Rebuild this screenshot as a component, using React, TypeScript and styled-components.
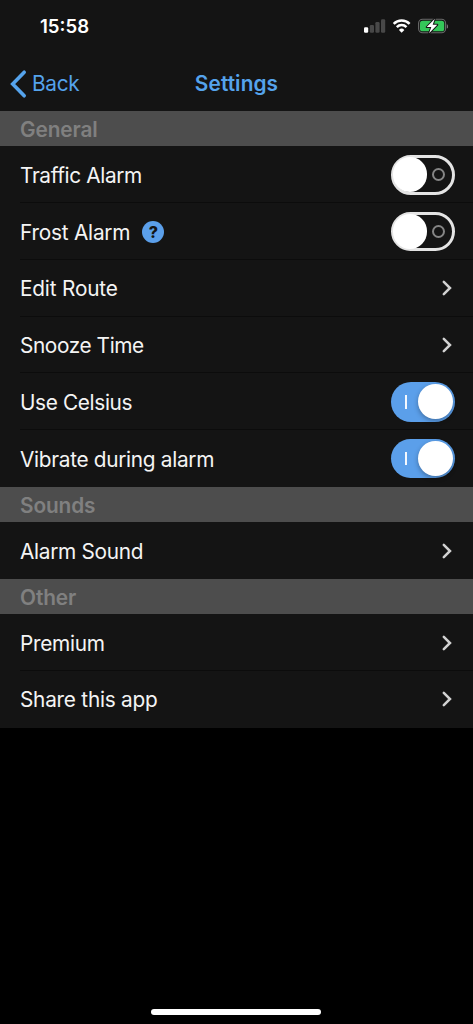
import React from "react";
import styled, { createGlobalStyle } from "styled-components";

const GlobalStyle = createGlobalStyle`
  * { box-sizing: border-box; }
  html, body { margin: 0; background: #000; }
  body { font-family: Inter, "Liberation Sans", sans-serif; overflow: hidden; }
`;

const Screen = styled.div`
  display: flex;
  flex-direction: column;
  width: 473px;
  height: 1024px;
  background: #000;
`;

const StatusBar = styled.header`
  display: flex;
  justify-content: space-between;
  height: 56px;
  padding: 0 25px 0 40px;
  background: #141414;
`;

const Clock = styled.time`
  padding-top: 14px;
  font-size: 18.6px;
  line-height: 24px;
  font-weight: 600;
  letter-spacing: 0;
  color: #fff;
`;

const NavBar = styled.nav`
  display: grid;
  grid-template-columns: 1fr auto 1fr;
  align-items: center;
  height: 55px;
  padding: 0 10px;
  background: #141414;
  color: #55a3ec;
`;

const BackButton = styled.button`
  display: flex;
  align-items: center;
  gap: 5px;
  padding: 0;
  border: 0;
  background: none;
  color: inherit;
  font: 400 20.8px/28px Inter, sans-serif;
  letter-spacing: -0.3px;
`;

const Title = styled.h1`
  margin: 0;
  font-size: 20.8px;
  line-height: 28px;
  font-weight: 600;
  letter-spacing: 0.1px;
`;

const SectionHeader = styled.h2`
  flex: none;
  height: 35.3px;
  margin: 0;
  padding: 1.3px 20px 0;
  background: #4d4d4d;
  color: #808080;
  font-size: 20.8px;
  line-height: 35px;
  font-weight: 600;
  letter-spacing: -0.1px;
`;

const Row = styled.div`
  display: flex;
  flex: none;
  height: 56.75px;
  padding-left: 20px;
  background: #141414;
`;

const RowBody = styled.div<{ $line: boolean }>`
  display: flex;
  flex: 1;
  align-items: center;
  justify-content: space-between;
  padding: 1.4px 18px 0 0;
  border-bottom: 1px solid ${(p) => (p.$line ? "#0c0c0c" : "#141414")};
`;

const Label = styled.span<{ $tracking: number }>`
  display: flex;
  align-items: center;
  gap: 12px;
  padding-top: 1.8px;
  color: #f4f4f4;
  font-size: 20.8px;
  line-height: 28px;
  letter-spacing: ${(p) => p.$tracking}px;
  white-space: nowrap;
`;

const HelpBadge = styled.span`
  display: grid;
  place-items: center;
  width: 22px;
  height: 22px;
  margin-bottom: 2px;
  border-radius: 50%;
  background: #5b9fea;
  color: #141414;
  font-size: 16px;
  line-height: 22px;
  font-weight: 800;
  letter-spacing: 0;
`;

const Track = styled.span<{ $on: boolean }>`
  display: flex;
  flex-direction: ${(p) => (p.$on ? "row-reverse" : "row")};
  align-items: center;
  width: 64.5px;
  height: 39.3px;
  padding: ${(p) => (p.$on ? "0 2.4px" : "0")};
  border: ${(p) => (p.$on ? "0" : "3px solid #e4e4e4")};
  border-radius: 20px;
  background: ${(p) => (p.$on ? "#5b9fea" : "#141414")};
`;

const Knob = styled.span<{ $on: boolean }>`
  flex: none;
  width: 34.8px;
  height: 34.8px;
  margin-left: ${(p) => (p.$on ? "0" : "-1px")};
  border-radius: 50%;
  background: #fff;
  box-shadow: ${(p) => (p.$on ? "0 2px 5px rgba(0,0,0,.3)" : "none")};
`;

const OffMark = styled.span`
  width: 13px;
  height: 13px;
  margin-left: 4.5px;
  border: 2px solid #858585;
  border-radius: 50%;
`;

const OnMark = styled.span`
  width: 2px;
  height: 13.5px;
  margin-right: 10.7px;
  background: #f4f8fe;
`;

const ChevronBox = styled.span`
  display: flex;
  padding-right: 2px;
`;

const Spacer = styled.div`
  flex: 1;
`;

const HomeIndicator = styled.div`
  align-self: center;
  width: 170px;
  height: 6px;
  margin: 0 1px 9px 0;
  border-radius: 3px;
  background: #fff;
`;

function StatusIcons() {
  return (
    <svg width="85" height="56" viewBox="363 0 85 56">
      <rect x="364" y="27.3" width="4.2" height="5.4" rx="1.2" fill="#fff" />
      <rect x="369.8" y="25" width="4.2" height="7.7" rx="1.2" fill="#484848" />
      <rect x="375.4" y="22" width="4.2" height="10.7" rx="1.2" fill="#484848" />
      <rect x="381" y="19.2" width="4.2" height="13.5" rx="1.2" fill="#484848" />
      <g fill="none" stroke="#fff" strokeWidth="2.5">
        <path d="M393.7 23.8a11.2 11.2 0 0 1 15.9 0" />
        <path d="M396.8 27.1a6.9 6.9 0 0 1 9.7 0" />
      </g>
      <path d="M401.65 32.8l-2.7-2.9a3.9 3.9 0 0 1 5.4 0z" fill="#fff" />
      <rect x="418.6" y="19.3" width="27" height="13.4" rx="4" fill="none" stroke="#6a6a6a" strokeWidth="1.1" />
      <rect x="420" y="20.7" width="24.2" height="10.6" rx="2.6" fill="#34c759" />
      <path d="M446.8 24v4.6c1.2-.5 1.6-1.3 1.2-2.3 0-1.1-.4-1.8-1.2-2.3z" fill="#777" />
      <path
        d="M434.8 18.7l-8.1 8.4h4.6l-2.2 6.2 8.2-8.5h-4.6z"
        fill="#fff"
        stroke="#141414"
        strokeWidth="2"
        paintOrder="stroke"
        strokeLinejoin="round"
      />
    </svg>
  );
}

function Switch({ on }: { on: boolean }) {
  return (
    <Track $on={on} role="switch" aria-checked={on}>
      <Knob $on={on} />
      {on ? <OnMark /> : <OffMark />}
    </Track>
  );
}

function Chevron() {
  return (
    <ChevronBox>
      <svg width="11" height="16" viewBox="0 0 11 16">
        <path d="M1.8 1.8L8 8L1.8 14.2" fill="none" stroke="#d2d2d2" strokeWidth="2.5" strokeLinecap="round" />
      </svg>
    </ChevronBox>
  );
}

type Item = { label: string; toggle?: boolean; help?: boolean; tracking?: number };

const sections: { title: string; items: Item[] }[] = [
  {
    title: "General",
    items: [
      { label: "Traffic Alarm", toggle: false, tracking: -0.36 },
      { label: "Frost Alarm", toggle: false, help: true, tracking: -0.22 },
      { label: "Edit Route", tracking: -0.18 },
      { label: "Snooze Time", tracking: -0.4 },
      { label: "Use Celsius", toggle: true, tracking: -0.36 },
      { label: "Vibrate during alarm", toggle: true },
    ],
  },
  { title: "Sounds", items: [{ label: "Alarm Sound" }] },
  { title: "Other", items: [{ label: "Premium" }, { label: "Share this app", tracking: -0.24 }] },
];

export default function App() {
  return (
    <>
      <GlobalStyle />
      <Screen>
        <StatusBar>
          <Clock>15:58</Clock>
          <StatusIcons />
        </StatusBar>
        <NavBar>
          <BackButton>
            <svg width="17" height="30" viewBox="0 0 17 30">
              <path d="M14.2 3.2L2.7 15L14.2 26.8" fill="none" stroke="currentColor" strokeWidth="3.6" strokeLinecap="round" />
            </svg>
            Back
          </BackButton>
          <Title>Settings</Title>
        </NavBar>
        {sections.map((section) => (
          <React.Fragment key={section.title}>
            <SectionHeader>{section.title}</SectionHeader>
            {section.items.map((item, i) => (
              <Row key={item.label}>
                <RowBody $line={i < section.items.length - 1}>
                  <Label $tracking={item.tracking ?? -0.3}>
                    {item.label}
                    {item.help && <HelpBadge>?</HelpBadge>}
                  </Label>
                  {item.toggle === undefined ? <Chevron /> : <Switch on={item.toggle} />}
                </RowBody>
              </Row>
            ))}
          </React.Fragment>
        ))}
        <Spacer />
        <HomeIndicator />
      </Screen>
    </>
  );
}
